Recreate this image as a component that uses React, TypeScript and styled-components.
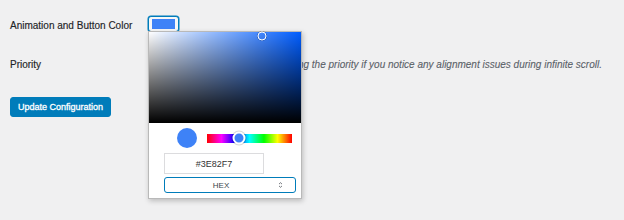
import { createGlobalStyle, styled } from 'styled-components';

const GlobalStyle = createGlobalStyle`
  html, body {
    margin: 0;
    padding: 0;
    background: #f0f0f1;
  }
  body {
    font-family: 'Liberation Sans', Arial, sans-serif;
    color: #1d2327;
  }
`;

const Page = styled.div`
  width: 624px;
  height: 220px;
  padding: 14px 10px 0;
  box-sizing: border-box;
`;

const FormRow = styled.div<{ $gap?: number }>`
  display: grid;
  grid-template-columns: 138px 1fr;
  align-items: center;
  height: 20px;
  margin-bottom: ${({ $gap }) => $gap ?? 0}px;
`;

const Label = styled.div`
  font-size: 10px;
  color: #1d2327;
  padding-top: 2px;
  -webkit-text-stroke: 0.15px #1d2327;
`;

const Field = styled.div`
  display: flex;
  align-items: center;
  gap: 6px;
  position: relative;
`;

const PickerAnchor = styled.div`
  position: relative;
`;

const SwatchButton = styled.button`
  width: 31px;
  height: 16px;
  padding: 2px 3px;
  border: 1px solid #007cba;
  border-radius: 3px;
  background: #f6f7f7;
  box-shadow: 0 0 0 0.5px #007cba;
  display: flex;
  box-sizing: border-box;
`;

const SwatchFill = styled.span<{ $color: string }>`
  flex: 1;
  background: ${({ $color }) => $color};
`;

const Popover = styled.div`
  position: absolute;
  top: 15px;
  left: 0px;
  width: 154px;
  background: #fff;
  border: 1px solid #b9b9b9;
  box-shadow: 1px 2px 5px rgba(0, 0, 0, 0.22);
  z-index: 5;
  box-sizing: border-box;
`;

const SatArea = styled.div<{ $hue: string }>`
  position: relative;
  height: 91px;
  background: linear-gradient(to top, #000, rgba(0, 0, 0, 0)),
    linear-gradient(to right, #fff, rgba(255, 255, 255, 0)), ${({ $hue }) => $hue};
`;

const SatPointer = styled.span`
  position: absolute;
  width: 7px;
  height: 7px;
  border-radius: 50%;
  border: 1.5px solid #fff;
  box-shadow: 0 0 0 0.5px rgba(0, 0, 0, 0.3);
  transform: translate(-50%, -50%);
`;

const Controls = styled.div`
  padding: 5px 5px 5px 15px;
  display: flex;
  flex-direction: column;
`;

const PreviewRow = styled.div`
  display: flex;
  align-items: center;
  height: 20px;
  padding-left: 13px;
  gap: 10px;
`;

const Preview = styled.span<{ $color: string }>`
  width: 20px;
  height: 20px;
  border-radius: 50%;
  background: ${({ $color }) => $color};
  flex: none;
`;

const HueTrack = styled.div`
  position: relative;
  width: 85px;
  height: 9px;
  background: linear-gradient(
    to right,
    #f00 0%,
    #f0f 17%,
    #00f 33%,
    #0ff 50%,
    #0f0 67%,
    #ff0 83%,
    #f00 100%
  );
`;

const HueThumb = styled.span<{ $color: string }>`
  position: absolute;
  top: 50%;
  width: 9px;
  height: 9px;
  border-radius: 50%;
  background: ${({ $color }) => $color};
  border: 2px solid #fff;
  box-shadow: 0 0 0 1px rgba(0, 0, 0, 0.15);
  transform: translate(-50%, -50%);
`;

const HexInput = styled.input`
  margin-top: 5px;
  width: 100px;
  height: 21px;
  box-sizing: border-box;
  border: 1px solid #dcdcde;
  border-radius: 0;
  background: #fff;
  text-align: center;
  font-family: 'Liberation Sans', Arial, sans-serif;
  font-size: 9px;
  color: #333;
  padding: 0;
  outline: none;
`;

const FormatSelect = styled.div`
  margin-top: 3px;
  width: 132px;
  height: 16px;
  box-sizing: border-box;
  border: 1px solid #007cba;
  border-radius: 3px;
  display: flex;
  align-items: center;
  justify-content: center;
  position: relative;
  padding-right: 18px;
  font-size: 8px;
  color: #3c434a;
`;

const SelectArrows = styled.span`
  position: absolute;
  right: 12px;
  top: 50%;
  transform: translateY(-50%);
  display: flex;
`;

const NumberInput = styled.input`
  width: 98px;
  height: 18px;
  box-sizing: border-box;
  border: 1px solid #8c8f94;
  border-radius: 3px;
  background: #fff;
`;

const Description = styled.span`
  font-size: 10px;
  font-style: italic;
  color: #5a6168;
  white-space: nowrap;
  padding-top: 2px;
  -webkit-text-stroke: 0.1px #5a6168;
`;

const SubmitButton = styled.button`
  margin-top: 24px;
  height: 20px;
  padding: 0 7px;
  background: #007cba;
  border: 1px solid #007cba;
  border-radius: 3px;
  color: #fff;
  font-family: 'Liberation Sans', Arial, sans-serif;
  font-size: 9px;
  -webkit-text-stroke: 0.3px #fff;
  cursor: pointer;
`;

const color = '#3E82F7';

export default function App() {
  return (
    <>
      <GlobalStyle />
      <Page>
        <FormRow $gap={19}>
          <Label>Animation and Button Color</Label>
          <Field>
            <PickerAnchor>
              <SwatchButton aria-label="Select color">
                <SwatchFill $color={color} />
              </SwatchButton>
              <Popover>
                <SatArea $hue="#005dff">
                  <SatPointer style={{ left: '74.5%', top: '4%' }} />
                </SatArea>
                <Controls>
                  <PreviewRow>
                    <Preview $color={color} />
                    <HueTrack>
                      <HueThumb $color={color} style={{ left: '38%' }} />
                    </HueTrack>
                  </PreviewRow>
                  <HexInput defaultValue="#3E82F7" readOnly />
                  <FormatSelect>
                    HEX
                    <SelectArrows>
                      <svg width="5" height="7" viewBox="0 0 5 7">
                        <path d="M1 2.6 L2.5 1.2 L4 2.6" fill="none" stroke="#50575e" strokeWidth="0.8" />
                        <path d="M1 4.4 L2.5 5.8 L4 4.4" fill="none" stroke="#50575e" strokeWidth="0.8" />
                      </svg>
                    </SelectArrows>
                  </FormatSelect>
                </Controls>
              </Popover>
            </PickerAnchor>
          </Field>
        </FormRow>
        <FormRow>
          <Label>Priority</Label>
          <Field>
            <NumberInput type="number" defaultValue={10} />
            <Description>
              Try changing the priority if you notice any alignment issues during infinite scroll.
            </Description>
          </Field>
        </FormRow>
        <SubmitButton>Update Configuration</SubmitButton>
      </Page>
    </>
  );
}
